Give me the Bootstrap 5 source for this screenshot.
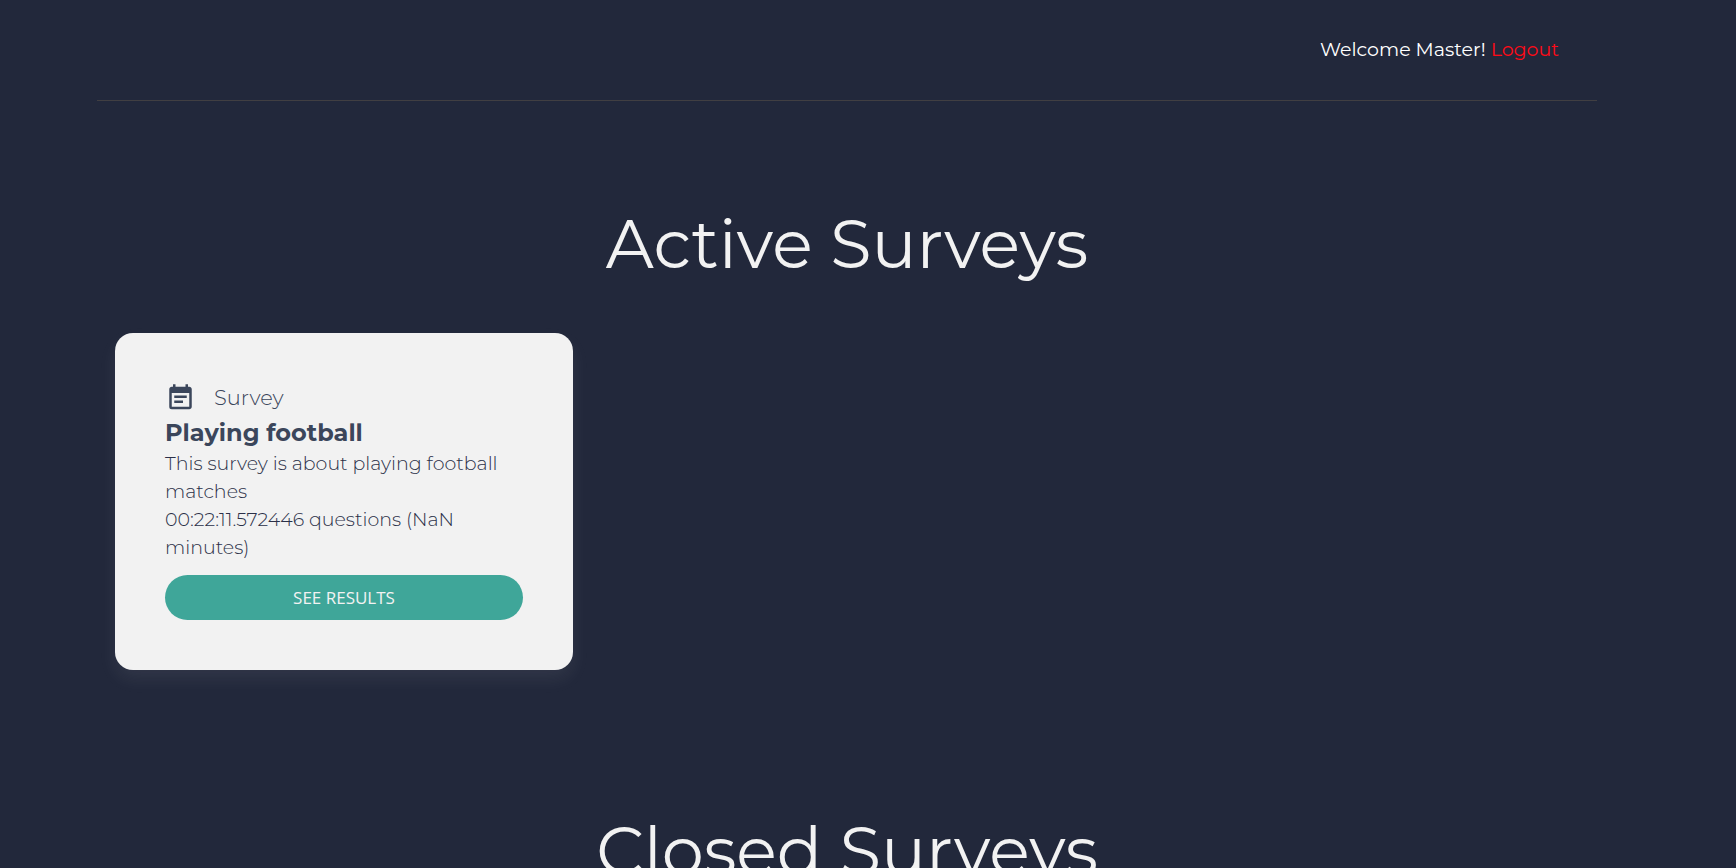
<!DOCTYPE html>
<html lang="en">
<head>
<meta charset="utf-8">
<meta name="viewport" content="width=device-width, initial-scale=1">
<title>Surveys</title>
<link href="https://cdn.jsdelivr.net/npm/bootstrap@5.3.0/dist/css/bootstrap.min.css" rel="stylesheet">
<style>
  body { background: #22283b; color: #f2f2f2; font-family: Montserrat, Inter, sans-serif; font-size: 19px; line-height: 28px; }
  .page { max-width: 1542px; padding-right: 42px; }
  .topbar { padding: 36px 38px 36px; border-bottom: 1px solid #413f42; font-weight: 400; color: #fff; }
  .logout { color: #ff0a16; }
  .section-title { margin: 93px 0 39px; font-size: 67px; line-height: 100px; font-weight: 400; }
  .survey-area { padding: 0 18px; }
  .survey-row { --bs-gutter-x: 45px; }
  .survey-card { background: #f2f2f2; color: #3b465b; border-radius: 18px; padding: 50px; box-shadow: 0 9px 18px rgba(242, 242, 242, .07); }
  .kind { font-size: 21px; font-weight: 300; gap: 18px; line-height: 30px; padding-bottom: 2px; }
  .survey-name { font-size: 24px; line-height: 35px; font-weight: 700; }
  .survey-text { color: #2b3048; font-weight: 300; }
  .results { background: #3fa699; color: #f2f2f2; font-family: "Open Sans", sans-serif; font-size: 17px; line-height: 45px; margin-top: 13px; }
  .results:hover { background: #37958a; color: #fff; }
  .closed { padding-top: 38px; }
</style>
</head>
<body>
<div class="page container-fluid ps-0">
  <header class="topbar text-end">
    <span>Welcome Master!</span>
    <a class="logout text-decoration-none" href="#">Logout</a>
  </header>
  <main>
    <section>
      <h1 class="section-title text-center">Active Surveys</h1>
      <div class="survey-area">
        <div class="row survey-row row-cols-1 row-cols-lg-3">
          <div class="col">
            <article class="survey-card">
              <div class="kind d-flex align-items-center">
                <svg width="31" height="30" viewBox="0 0 24 24" fill="currentColor" aria-hidden="true"><path d="M17 10H7v2h10v-2zm2-7h-1V1h-2v2H8V1H6v2H5c-1.110 0-1.990.9-1.990 2L3 19a2 2 0 0 0 2 2h14c1.100 0 2-.9 2-2V5c0-1.100-.9-2-2-2zm0 16H5V8h14v11zm-5-5H7v2h7v-2z"/></svg>
                <span>Survey</span>
              </div>
              <h2 class="survey-name mb-0">Playing football</h2>
              <p class="survey-text mb-0">This survey is about playing football matches</p>
              <p class="survey-text mb-0">00:22:11.572446 questions (NaN minutes)</p>
              <button type="button" class="results btn rounded-pill border-0 w-100 p-0">SEE RESULTS</button>
            </article>
          </div>
        </div>
      </div>
    </section>
    <section class="closed">
      <h1 class="section-title text-center">Closed Surveys</h1>
    </section>
  </main>
</div>
<script src="https://cdn.jsdelivr.net/npm/bootstrap@5.3.0/dist/js/bootstrap.bundle.min.js"></script>
</body>
</html>
